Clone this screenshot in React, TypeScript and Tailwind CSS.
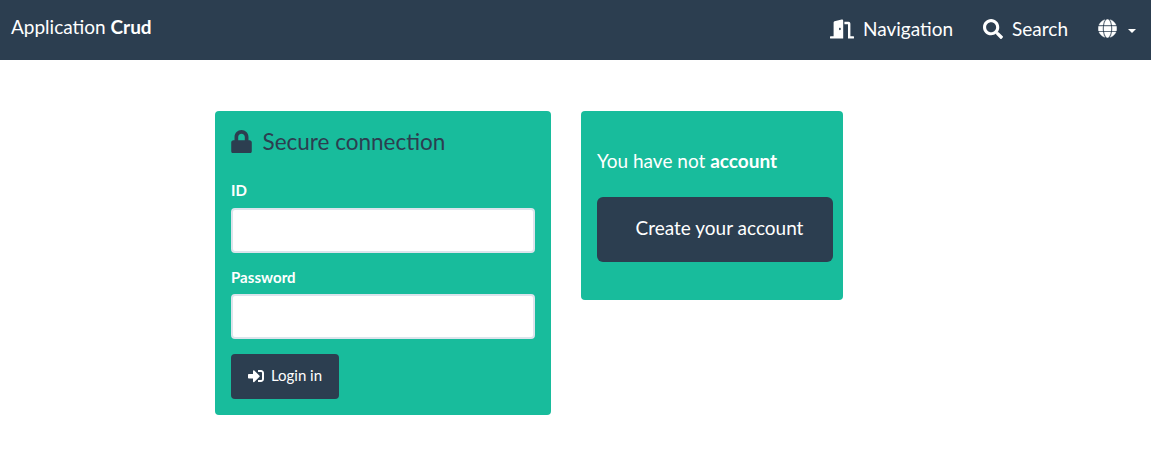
import { FaDoorOpen, FaGlobe, FaLock, FaSearch, FaSignInAlt } from "react-icons/fa";

function Field({ id, label, type, gap }: { id: string; label: string; type: string; gap: string }) {
  return (
    <div className={`flex flex-col ${gap}`}>
      <label htmlFor={id} className="text-[15px] leading-[21px] font-bold tracking-[0.05px] text-white">{label}</label>
      <input id={id} type={type} className="h-[45px] w-full rounded border-2 border-[#dce4ec] bg-white px-3 text-[15px] outline-none" />
    </div>
  );
}

export default function App() {
  return (
    <div className="min-h-[460px] bg-white font-['Lato',sans-serif] text-white">
      <nav className="flex h-[60px] justify-between bg-[#2c3e50] pr-[15px] pl-[11px]">
        <div className="pt-[14px] text-[19px] leading-[26px]">Application <b>Crud</b></div>
        <div className="flex items-center pb-[2px] text-[19px] leading-[26px]">
          <a className="flex items-center gap-[9px]"><FaDoorOpen className="h-5 w-6" />Navigation</a>
          <a className="ml-[30px] flex items-center gap-[9px]"><FaSearch className="h-5 w-5" />Search</a>
          <a className="ml-[30px] flex items-center gap-[11px]">
            <FaGlobe className="mb-px h-[19px] w-[19px] stroke-white stroke-[10px]" />
            <span className="mt-1 border-x-4 border-t-4 border-x-transparent border-t-white" />
          </a>
        </div>
      </nav>
      <main className="flex items-start gap-[30px] pt-[51px] pl-[215px]">
        <form className="h-[304px] w-[336px] rounded bg-[#18bc9c] px-4 pt-4">
          <h2 className="flex h-[30px] items-center gap-[10.5px] text-[22.5px] text-[#2c3e50]"><FaLock className="mb-px h-[23.5px] w-[21px]" /><span className="pb-px">Secure connection</span></h2>
          <div className="mt-[23px] flex flex-col gap-[14px]">
            <Field id="user-id" label="ID" type="text" gap="gap-[7px]" />
            <Field id="password" label="Password" type="password" gap="gap-[6px]" />
          </div>
          <button type="button" className="mt-[15px] flex h-[45px] w-[108px] items-center justify-center gap-[7px] rounded bg-[#2c3e50] pb-[2px] text-[15px]"><FaSignInAlt className="h-4 w-4" />Login in</button>
        </form>
        <section className="h-[189px] w-[262px] rounded bg-[#18bc9c] pt-9 pl-4">
          <p className="text-[19px] leading-[27px]">You have not <b>account</b></p>
          <button type="button" className="mt-[23px] h-[65px] w-[236px] rounded-md bg-[#2c3e50] pb-[2px] pl-[9px] text-[19px]">Create your account</button>
        </section>
      </main>
    </div>
  );
}
